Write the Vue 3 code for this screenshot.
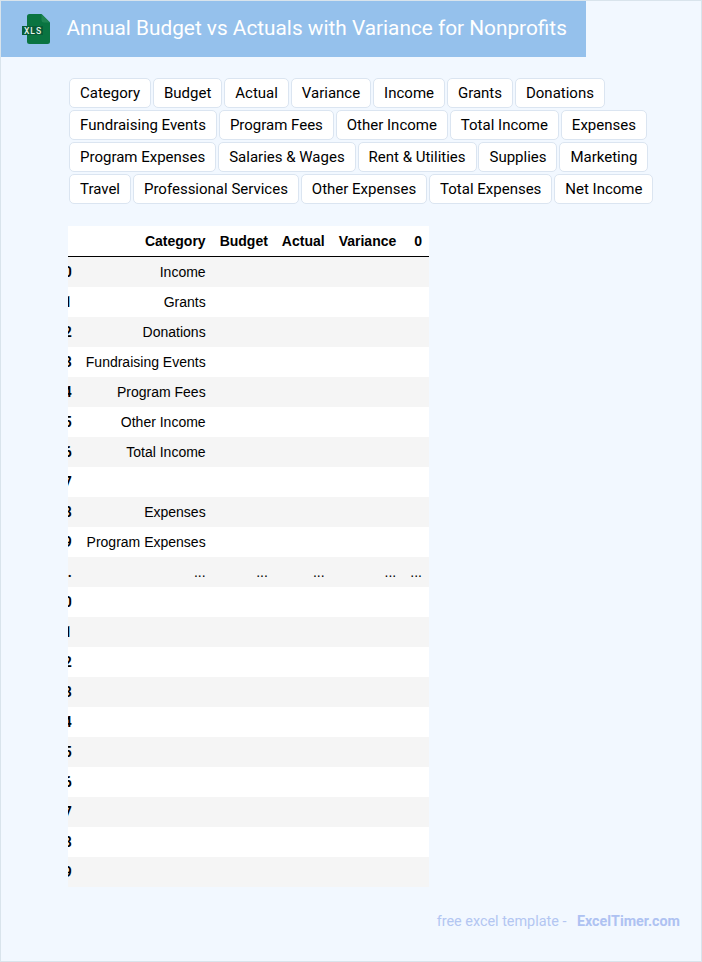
<script setup>
const tags = ['Category','Budget','Actual','Variance','Income','Grants','Donations','Fundraising Events','Program Fees','Other Income','Total Income','Expenses','Program Expenses','Salaries & Wages','Rent & Utilities','Supplies','Marketing','Travel','Professional Services','Other Expenses','Total Expenses','Net Income']
const columns = ['Category','Budget','Actual','Variance','0']
const names = ['Income','Grants','Donations','Fundraising Events','Program Fees','Other Income','Total Income','','Expenses','Program Expenses']
const rows = [
  ...names.map((n, i) => ({ idx: String(i), cells: [n,'','','',''], more: false })),
  { idx: '...', cells: ['...','...','...','...','...'], more: true },
  ...Array.from({ length: 10 }, (_, i) => ({ idx: String(i), cells: ['','','','',''], more: false }))
]
</script>

<template>
  <div class="page">
    <header class="banner">
      <svg class="logo" width="30" height="32" viewBox="0 0 30 32">
        <path d="M6 3.500A2.500 2.500 0 0 1 8.500 1H20.500L29 9.500V28.500A2.500 2.500 0 0 1 26.500 31H8.500A2.500 2.500 0 0 1 6 28.500Z" fill="#0a7441"/>
        <path d="M20.500 1L29 9.500H23a2.500 2.500 0 0 1-2.500-2.500Z" fill="#1f8552"/>
        <rect x="1" y="13" width="21" height="9" fill="#075c37"/>
        <text x="12" y="20.500" text-anchor="middle" class="logo-text">XLS</text>
      </svg>
      <h1 class="title">Annual Budget vs Actuals with Variance for Nonprofits</h1>
    </header>

    <div class="tags">
      <span v-for="t in tags" :key="t" class="tag">{{ t }}</span>
    </div>

    <div class="table-clip">
      <table class="frame">
        <thead>
          <tr>
            <th></th>
            <th v-for="c in columns" :key="c">{{ c }}</th>
          </tr>
        </thead>
        <tbody>
          <tr v-for="(r, i) in rows" :key="i">
            <th class="idx">{{ r.idx }}</th>
            <td v-for="(c, j) in r.cells" :key="j">{{ c }}</td>
          </tr>
        </tbody>
      </table>
    </div>

    <footer class="foot">
      <span>free excel template -</span>
      <b class="brand">ExcelTimer.com</b>
    </footer>
  </div>
</template>

<style>
html, body { margin: 0; padding: 0; }
</style>

<style scoped>
.page {
  box-sizing: border-box;
  width: 702px;
  height: 962px;
  overflow: hidden;
  background: #f2f8ff;
  border: 1px solid #d9e4ec;
  font-family: Roboto, sans-serif;
}
.banner {
  box-sizing: border-box;
  width: 585px;
  height: 56px;
  background: #95c1ec;
  display: flex;
  align-items: center;
  padding-left: 20px;
  gap: 15.5px;
}
.logo { flex: none; overflow: visible; }
.logo-text {
  font-family: Roboto, sans-serif;
  font-size: 8.5px;
  font-weight: 500;
  letter-spacing: 1px;
  fill: #e8f3ec;
}
.title {
  margin: 0 0 2px;
  font-size: 20.8px;
  font-weight: 400;
  color: #fff;
  white-space: nowrap;
}
.tags {
  width: 590px;
  margin: 21px 0 0 68px;
  display: flex;
  flex-wrap: wrap;
  gap: 2px 1.93px;
}
.tag {
  box-sizing: border-box;
  height: 30px;
  padding: 0 10px;
  line-height: 28px;
  font-size: 15px;
  color: #000;
  background: #fff;
  border: 1px solid #dbe5f1;
  border-radius: 5px;
  white-space: nowrap;
}
.table-clip {
  width: 362px;
  margin: 22px 0 0 67px;
  overflow: hidden;
}
.frame {
  margin-left: -15.4px;
  border-collapse: separate;
  border-spacing: 0;
  font-family: "Liberation Sans", Arial, sans-serif;
  font-size: 14px;
  color: #000;
  background: #fff;
}
.frame th, .frame td {
  padding: 0 7px;
  height: 30px;
  text-align: right;
  white-space: nowrap;
  box-sizing: border-box;
}
.frame thead th { height: 31px; border-bottom: 1px solid #000; }
.frame tbody tr:nth-child(odd) { background: #f5f5f5; }
.frame .idx { font-family: Roboto, sans-serif; }
.foot {
  margin-top: 26px;
  padding-right: 21px;
  display: flex;
  justify-content: flex-end;
  gap: 10.5px;
  font-size: 14.4px;
  color: #b3c6f2;
}
.brand { font-size: 14.3px; font-weight: 700; color: #aec2f2; }
</style>
